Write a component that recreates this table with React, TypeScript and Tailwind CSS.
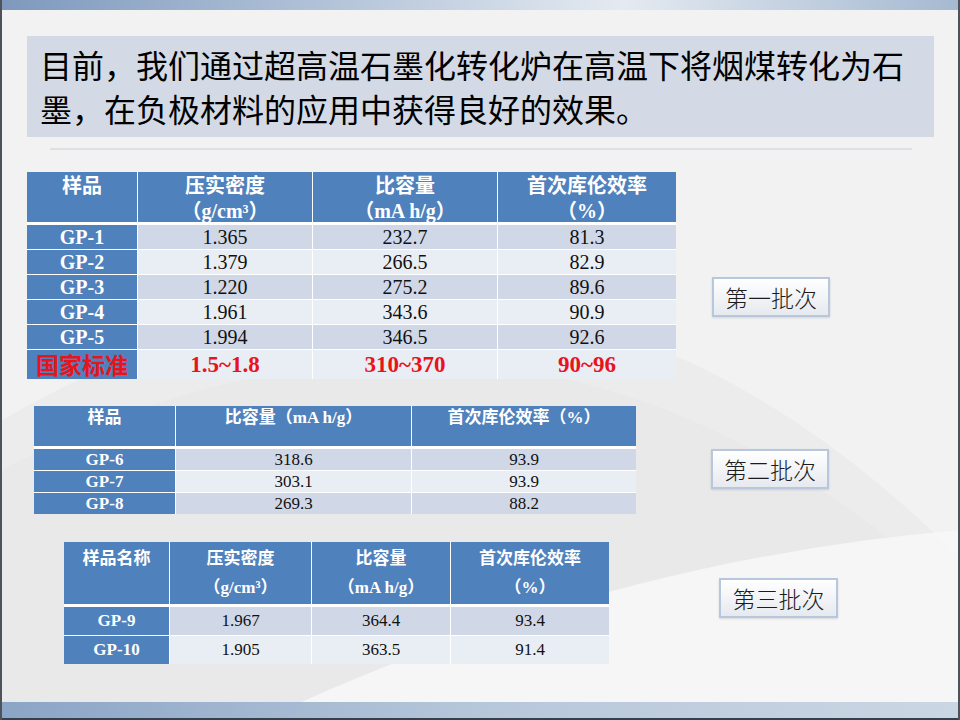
import { Fragment, type ReactNode } from "react";

const serif = "font-['Liberation_Serif','Noto_Sans_CJK_SC',serif]";

type Row = { name: ReactNode; values: ReactNode[]; tone: "dark" | "light" };

const batch1: Row[] = [
  { name: "GP-1", values: ["1.365", "232.7", "81.3"], tone: "dark" },
  { name: "GP-2", values: ["1.379", "266.5", "82.9"], tone: "light" },
  { name: "GP-3", values: ["1.220", "275.2", "89.6"], tone: "dark" },
  { name: "GP-4", values: ["1.961", "343.6", "90.9"], tone: "light" },
  { name: "GP-5", values: ["1.994", "346.5", "92.6"], tone: "dark" },
];

const batch2: Row[] = [
  { name: "GP-6", values: ["318.6", "93.9"], tone: "dark" },
  { name: "GP-7", values: ["303.1", "93.9"], tone: "light" },
  { name: "GP-8", values: ["269.3", "88.2"], tone: "dark" },
];

const batch3: Row[] = [
  { name: "GP-9", values: ["1.967", "364.4", "93.4"], tone: "dark" },
  { name: "GP-10", values: ["1.905", "363.5", "91.4"], tone: "light" },
];

function toneClass(tone: "dark" | "light") {
  return tone === "dark" ? "bg-[#d0d8e8]" : "bg-[#e9edf4]";
}

function BatchLabel({ children, className = "" }: { children: ReactNode; className?: string }) {
  return (
    <div
      className={`flex h-[40px] shrink-0 items-center justify-center border-2 border-[#b7c8de] bg-linear-to-b from-white to-[#e6e9ee] font-['Noto_Sans_CJK_SC',sans-serif] text-[23px] font-light text-[#1c1c1c] shadow-[0_1px_2px_rgba(0,0,0,0.12)] ${className}`}
    >
      {children}
    </div>
  );
}

// faint fan painting behind the slide content
function Backdrop() {
  return (
    <svg className="pointer-events-none absolute inset-0" width="960" height="720" viewBox="0 0 960 720">
      <path d="M0 420 Q 520 120 960 560 L960 720 L0 720 Z" fill="#e4e4e4" opacity="0.45" />
      <path d="M0 470 Q 520 200 960 600 L960 720 L0 720 Z" fill="#dedede" opacity="0.25" />
      <path d="M260 720 Q 600 560 960 530 L960 720 Z" fill="#f8f8f8" opacity="0.85" />
    </svg>
  );
}

export default function App() {
  const head = "bg-[#4f81bd] text-center font-bold text-white";

  return (
    <div className="relative flex h-[720px] w-[960px] flex-col overflow-hidden border-x-2 border-[#4e535a] bg-[#f2f2f2]">
      <Backdrop />
      <div className="relative h-[10px] shrink-0 bg-linear-to-r from-[#7e99bd] via-[#e4eaf1] via-65% to-[#a5b9d1]" />

      <main className="relative flex flex-1 flex-col">
        <div className="ml-[25px] mt-[26px] h-[101px] w-[907px] bg-[#d3dae5] pl-[13px] pt-[6px] font-['Noto_Sans_CJK_SC',sans-serif] text-[32px] leading-[44px] text-black">
          目前，我们通过超高温石墨化转化炉在高温下将烟煤转化为石
          <br />
          墨，在负极材料的应用中获得良好的效果。
        </div>
        <div className="ml-[48px] mt-[11px] h-[2px] w-[862px] bg-[#dde1e6]" />

        {/* batch 1 */}
        <div className="ml-[25px] mt-[22px] flex items-start">
          <div className={`grid w-[649px] grid-cols-[110px_174px_184px_178px] gap-px bg-white ${serif}`}>
            <div className={`${head} mb-[2px] h-[50px] pt-[2px] text-[20px] leading-[25px]`}>样品</div>
            <div className={`${head} mb-[2px] h-[50px] pt-[2px] text-[20px] leading-[25px]`}>
              压实密度
              <br />
              （g/cm³）
            </div>
            <div className={`${head} mb-[2px] h-[50px] pt-[2px] text-[20px] leading-[25px]`}>
              比容量
              <br />
              （mA h/g）
            </div>
            <div className={`${head} mb-[2px] h-[50px] pt-[2px] text-[20px] leading-[25px]`}>
              首次库伦效率
              <br />
              （%）
            </div>
            {batch1.map((row) => (
              <Fragment key={String(row.name)}>
                <div className={`${head} h-[24px] text-[20px] leading-[24px]`}>{row.name}</div>
                {row.values.map((v, i) => (
                  <div
                    key={i}
                    className={`${toneClass(row.tone)} h-[24px] text-center text-[20px] leading-[24px] text-[#111]`}
                  >
                    {v}
                  </div>
                ))}
              </Fragment>
            ))}
            <div className="h-[29px] bg-[#4f81bd] text-center font-['Noto_Sans_CJK_SC',sans-serif] text-[23px] font-bold leading-[29px] text-[#e8131b]">
              国家标准
            </div>
            <div className="h-[29px] bg-[#e9edf4] text-center text-[23px] font-bold leading-[30px] text-[#e8131b]">1.5~1.8</div>
            <div className="h-[29px] bg-[#e9edf4] text-center text-[23px] font-bold leading-[30px] text-[#e8131b]">310~370</div>
            <div className="h-[29px] bg-[#e9edf4] text-center text-[23px] font-bold leading-[30px] text-[#e8131b]">90~96</div>
          </div>
          <BatchLabel className="ml-[36px] mt-[105px] w-[118px]">第一批次</BatchLabel>
        </div>

        {/* batch 2 */}
        <div className="ml-[32px] mt-[27px] flex items-start">
          <div className={`grid w-[602px] grid-cols-[141px_235px_224px] gap-px bg-white ${serif}`}>
            <div className={`${head} mb-[2px] h-[40px] text-[17px] leading-[24px]`}>样品</div>
            <div className={`${head} mb-[2px] h-[40px] text-[17px] leading-[24px]`}>比容量（mA h/g）</div>
            <div className={`${head} mb-[2px] h-[40px] text-[17px] leading-[24px]`}>首次库伦效率（%）</div>
            {batch2.map((row) => (
              <Fragment key={String(row.name)}>
                <div className={`${head} h-[21px] text-[17px] leading-[22px]`}>{row.name}</div>
                {row.values.map((v, i) => (
                  <div
                    key={i}
                    className={`${toneClass(row.tone)} h-[21px] text-center text-[17px] leading-[22px] text-[#111]`}
                  >
                    {v}
                  </div>
                ))}
              </Fragment>
            ))}
          </div>
          <BatchLabel className="ml-[75px] mt-[43px] w-[118px]">第二批次</BatchLabel>
        </div>

        {/* batch 3 */}
        <div className="ml-[62px] mt-[28px] flex items-start">
          <div className={`grid w-[545px] grid-cols-[105px_141px_138px_158px] gap-px bg-white ${serif}`}>
            <div className={`${head} mb-[2px] h-[62px] pt-[2px] text-[17px] leading-[29px]`}>样品名称</div>
            <div className={`${head} mb-[2px] h-[62px] pt-[2px] text-[17px] leading-[29px]`}>
              压实密度
              <br />
              （g/cm³）
            </div>
            <div className={`${head} mb-[2px] h-[62px] pt-[2px] text-[17px] leading-[29px]`}>
              比容量
              <br />
              （mA h/g）
            </div>
            <div className={`${head} mb-[2px] h-[62px] pt-[2px] text-[17px] leading-[29px]`}>
              首次库伦效率
              <br />
              （%）
            </div>
            {batch3.map((row) => (
              <Fragment key={String(row.name)}>
                <div className={`${head} h-[28px] text-[17px] leading-[28px]`}>{row.name}</div>
                {row.values.map((v, i) => (
                  <div
                    key={i}
                    className={`${toneClass(row.tone)} h-[28px] text-center text-[17px] leading-[28px] text-[#111]`}
                  >
                    {v}
                  </div>
                ))}
              </Fragment>
            ))}
          </div>
          <BatchLabel className="ml-[110px] mt-[36px] w-[119px]">第三批次</BatchLabel>
        </div>
      </main>

      <div className="relative h-[16px] shrink-0 bg-linear-to-r from-[#8ba5c6] via-[#b7c7da] via-50% to-[#cad6e3]" />
      <div className="relative h-[2px] shrink-0 bg-[#34404d]" />
    </div>
  );
}
